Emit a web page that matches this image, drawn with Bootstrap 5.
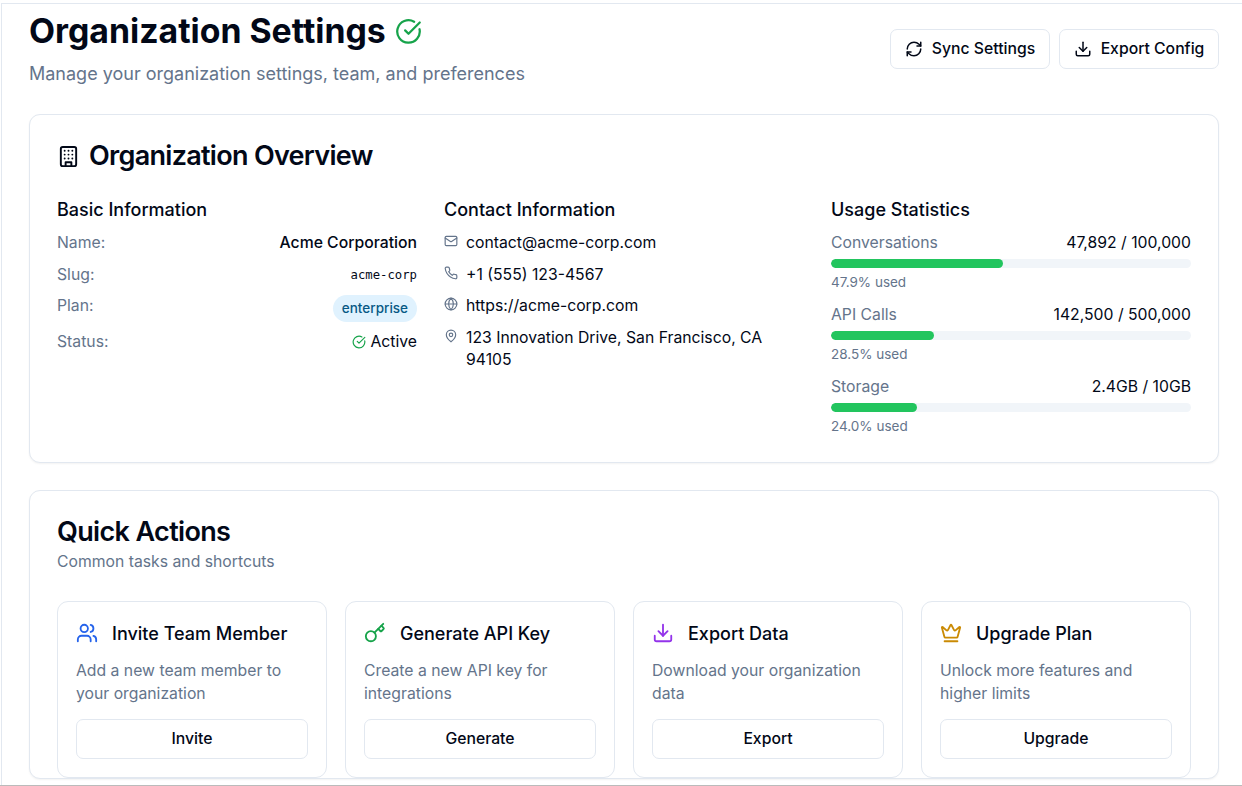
<!DOCTYPE html>
<html lang="en">
  <head>
    <meta charset="UTF-8" />
    <link href="https://cdn.jsdelivr.net/npm/bootstrap@5.3.1/dist/css/bootstrap.min.css" rel="stylesheet" />
    <title>Organization Settings</title>
    <style>
      html, body { height: 786px; overflow: hidden; }
      body { font-family: Inter, "Liberation Sans", sans-serif; color: #020817; background: #fff; font-size: 15.75px; line-height: 22.5px; }
      .app-frame { height: 786px; overflow: hidden; padding-top: 3px; border-bottom: 1px solid #bbb; }
      .page-wrap { margin-left: 1px; border-top: 1px solid #e2e8f0; border-left: 1px solid #e2e8f0; height: 782px; padding: 0 23px 0 27px; overflow: hidden; }
      .page-head { height: 110px; }
      .page-title { font-size: 33.8px; line-height: 54px; font-weight: 700; margin: 0; color: #020817; gap: 9px; }
      .page-sub { font-size: 18px; line-height: 27px; color: #64748b; margin: 2px 0 0; }
      .ic { fill: none; stroke: currentColor; stroke-width: 2; stroke-linecap: round; stroke-linejoin: round; flex-shrink: 0; }
      .btn-plain { --bs-btn-border-color: #e2e8f0; --bs-btn-hover-border-color: #e2e8f0; --bs-btn-color: #020817; --bs-btn-bg: #fff; --bs-btn-font-size: 15.75px; --bs-btn-font-weight: 500; --bs-btn-border-radius: 7px; height: 40px; padding: 0; line-height: 1; }
      .head-actions { gap: 9px; margin-top: 25px; }
      .head-btn { width: 160px; gap: 9px; }
      .panel { --bs-card-border-color: #e2e8f0; --bs-card-border-radius: 11px; width: 1190px; box-shadow: 0 1px 2px rgba(0,0,0,.05); }
      .overview { height: 349px; margin-bottom: 27px; }
      .panel .card-body { padding: 21px 27px 0; }
      .panel-title { font-size: 27px; line-height: 40px; font-weight: 600; margin: 0; letter-spacing: -.65px; }
      .overview-head { gap: 9px; }
      .overview-head .panel-title { letter-spacing: -.7px; }
      .info-grid { display: grid; grid-template-columns: repeat(3, 360px); column-gap: 27px; margin-top: 20px; }
      .sec-title { font-size: 18px; line-height: 27px; font-weight: 500; margin: 0 0 9px; }
      .stack { display: flex; flex-direction: column; gap: 9px; }
      .muted-txt { color: #64748b; }
      .strong-txt { font-weight: 500; }
      .slug { font-family: "DejaVu Sans Mono", "Liberation Mono", monospace; font-size: 12.25px; }
      .plan-pill { background: #e0f2fe; color: #075985; font-size: 13.5px; font-weight: 500; height: 27px; line-height: 27px; padding: 0 9px; border-radius: 14px; }
      .usage-item { height: 72px; }
      .usage-bar { --bs-progress-height: 9px; --bs-progress-bg: #f1f5f9; --bs-progress-border-radius: 5px; --bs-progress-bar-bg: #22c55e; margin-top: 4px; }
      .usage-bar .progress-bar { border-radius: 5px; }
      .used-note { font-size: 13.5px; line-height: 20px; color: #64748b; margin-top: 4px; }
      .contact-ic { color: #64748b; margin-top: 2px; }
      .quick-sub { margin-top: -1px; }
      .action-grid { display: grid; grid-template-columns: repeat(4, 270px); column-gap: 18px; margin-top: 27px; }
      .action-card { --bs-card-border-color: #e2e8f0; --bs-card-border-radius: 11px; height: 177px; }
      .action-card .card-body { padding: 18px 18px 18px; display: flex; flex-direction: column; }
      .action-head { gap: 14px; }
      .action-title { font-size: 18px; line-height: 27px; font-weight: 500; margin: 0; }
      .action-desc { color: #64748b; line-height: 23px; margin: 12px 0 14px; }
      .tone-blue { color: #2563eb; }
      .tone-green { color: #16a34a; }
      .tone-purple { color: #9333ea; }
      .tone-amber { color: #ca8a04; }
    </style>
  </head>

  <body>
    <svg width="0" height="0" class="position-absolute">
      <defs>
        <symbol id="i-check" viewBox="0 0 24 24"><path d="M21.801 10A10 10 0 1 1 17 3.335" /><path d="m9 11 3 3L22 4" /></symbol>
        <symbol id="i-sync" viewBox="0 0 24 24"><path d="M3 12a9 9 0 0 1 9-9 9.75 9.75 0 0 1 6.74 2.74L21 8" /><path d="M21 3v5h-5" /><path d="M21 12a9 9 0 0 1-9 9 9.75 9.75 0 0 1-6.74-2.74L3 16" /><path d="M8 16H3v5" /></symbol>
        <symbol id="i-download" viewBox="0 0 24 24"><path d="M21 15v4a2 2 0 0 1-2 2H5a2 2 0 0 1-2-2v-4" /><polyline points="7 10 12 15 17 10" /><line x1="12" x2="12" y1="15" y2="3" /></symbol>
        <symbol id="i-building" viewBox="0 0 24 24"><rect width="16" height="20" x="4" y="2" rx="2" /><path d="M9 22v-4h6v4" /><path d="M8 6h.01M16 6h.01M12 6h.01M12 10h.01M12 14h.01M16 10h.01M16 14h.01M8 10h.01M8 14h.01" /></symbol>
        <symbol id="i-mail" viewBox="0 0 24 24"><rect width="20" height="16" x="2" y="4" rx="2" /><path d="m22 7-8.97 5.7a1.94 1.94 0 0 1-2.06 0L2 7" /></symbol>
        <symbol id="i-phone" viewBox="0 0 24 24"><path d="M22 16.92v3a2 2 0 0 1-2.18 2 19.79 19.79 0 0 1-8.63-3.07 19.5 19.5 0 0 1-6-6 19.79 19.79 0 0 1-3.07-8.67A2 2 0 0 1 4.11 2h3a2 2 0 0 1 2 1.72 12.84 12.84 0 0 0 .7 2.81 2 2 0 0 1-.45 2.11L8.09 9.91a16 16 0 0 0 6 6l1.27-1.27a2 2 0 0 1 2.11-.45 12.84 12.84 0 0 0 2.81.7A2 2 0 0 1 22 16.92z" /></symbol>
        <symbol id="i-globe" viewBox="0 0 24 24"><circle cx="12" cy="12" r="10" /><path d="M12 2a14.5 14.5 0 0 0 0 20 14.5 14.5 0 0 0 0-20" /><path d="M2 12h20" /></symbol>
        <symbol id="i-pin" viewBox="0 0 24 24"><path d="M20 10c0 6-8 12-8 12s-8-6-8-12a8 8 0 0 1 16 0Z" /><circle cx="12" cy="10" r="3" /></symbol>
        <symbol id="i-users" viewBox="0 0 24 24"><path d="M16 21v-2a4 4 0 0 0-4-4H6a4 4 0 0 0-4 4v2" /><circle cx="9" cy="7" r="4" /><path d="M22 21v-2a4 4 0 0 0-3-3.87" /><path d="M16 3.13a4 4 0 0 1 0 7.75" /></symbol>
        <symbol id="i-key" viewBox="0 0 24 24"><path d="m15.5 7.5 2.3 2.3a1 1 0 0 0 1.4 0l2.1-2.1a1 1 0 0 0 0-1.4L19 4" /><path d="m21 2-9.6 9.6" /><circle cx="7.5" cy="15.5" r="5.5" /></symbol>
        <symbol id="i-crown" viewBox="0 0 24 24"><path d="M11.562 3.266a.5.5 0 0 1 .876 0L15.39 8.87a1 1 0 0 0 1.516.294L21.183 5.5a.5.5 0 0 1 .798.519l-2.834 10.246a1 1 0 0 1-.956.734H5.81a1 1 0 0 1-.957-.734L2.02 6.02a.5.5 0 0 1 .798-.519l4.276 3.664a1 1 0 0 0 1.516-.294z" /><path d="M5 21h14" /></symbol>
      </defs>
    </svg>

    <div class="app-frame">
      <div class="page-wrap">
        <!-- Page header -->
        <div class="page-head d-flex justify-content-between align-items-start">
          <div>
            <h1 class="page-title d-flex align-items-center">Organization Settings
              <svg class="ic tone-green" width="27" height="27"><use href="#i-check" /></svg>
            </h1>
            <p class="page-sub">Manage your organization settings, team, and preferences</p>
          </div>
          <div class="d-flex head-actions">
            <button class="btn btn-plain head-btn d-flex align-items-center justify-content-center">
              <svg class="ic" width="18" height="18"><use href="#i-sync" /></svg>Sync Settings
            </button>
            <button class="btn btn-plain head-btn d-flex align-items-center justify-content-center">
              <svg class="ic" width="18" height="18"><use href="#i-download" /></svg>Export Config
            </button>
          </div>
        </div>

        <!-- Organization overview -->
        <div class="card panel overview">
          <div class="card-body">
            <div class="d-flex align-items-center overview-head">
              <svg class="ic" width="23" height="23"><use href="#i-building" /></svg>
              <h2 class="panel-title">Organization Overview</h2>
            </div>
            <div class="info-grid">
              <div>
                <h3 class="sec-title">Basic Information</h3>
                <div class="stack">
                  <div class="d-flex justify-content-between"><span class="muted-txt">Name:</span><span class="strong-txt">Acme Corporation</span></div>
                  <div class="d-flex justify-content-between"><span class="muted-txt">Slug:</span><span class="slug">acme-corp</span></div>
                  <div class="d-flex justify-content-between"><span class="muted-txt">Plan:</span><span class="plan-pill">enterprise</span></div>
                  <div class="d-flex justify-content-between"><span class="muted-txt">Status:</span>
                    <span class="d-flex align-items-center gap-1"><svg class="ic tone-green" width="14" height="14"><use href="#i-check" /></svg>Active</span>
                  </div>
                </div>
              </div>
              <div>
                <h3 class="sec-title">Contact Information</h3>
                <div class="stack">
                  <div class="d-flex gap-2"><svg class="ic contact-ic" width="14" height="14"><use href="#i-mail" /></svg><span>contact@acme-corp.com</span></div>
                  <div class="d-flex gap-2"><svg class="ic contact-ic" width="14" height="14"><use href="#i-phone" /></svg><span>+1 (555) 123-4567</span></div>
                  <div class="d-flex gap-2"><svg class="ic contact-ic" width="14" height="14"><use href="#i-globe" /></svg><span>https://acme-corp.com</span></div>
                  <div class="d-flex gap-2"><svg class="ic contact-ic" width="14" height="14"><use href="#i-pin" /></svg><span>123 Innovation Drive, San Francisco, CA 94105</span></div>
                </div>
              </div>
              <div>
                <h3 class="sec-title">Usage Statistics</h3>
                <div class="usage-item">
                  <div class="d-flex justify-content-between"><span class="muted-txt">Conversations</span><span>47,892 / 100,000</span></div>
                  <div class="progress usage-bar"><div class="progress-bar" style="width: 47.9%"></div></div>
                  <div class="used-note">47.9% used</div>
                </div>
                <div class="usage-item">
                  <div class="d-flex justify-content-between"><span class="muted-txt">API Calls</span><span>142,500 / 500,000</span></div>
                  <div class="progress usage-bar"><div class="progress-bar" style="width: 28.5%"></div></div>
                  <div class="used-note">28.5% used</div>
                </div>
                <div class="usage-item">
                  <div class="d-flex justify-content-between"><span class="muted-txt">Storage</span><span>2.4GB / 10GB</span></div>
                  <div class="progress usage-bar"><div class="progress-bar" style="width: 24%"></div></div>
                  <div class="used-note">24.0% used</div>
                </div>
              </div>
            </div>
          </div>
        </div>

        <!-- Quick actions -->
        <div class="card panel">
          <div class="card-body">
            <h2 class="panel-title quick-title">Quick Actions</h2>
            <div class="muted-txt quick-sub">Common tasks and shortcuts</div>
            <div class="action-grid">
              <div class="card action-card"><div class="card-body">
                <div class="d-flex align-items-center action-head"><svg class="ic tone-blue" width="22" height="22"><use href="#i-users" /></svg><h3 class="action-title">Invite Team Member</h3></div>
                <p class="action-desc">Add a new team member to your organization</p>
                <button class="btn btn-plain w-100">Invite</button>
              </div></div>
              <div class="card action-card"><div class="card-body">
                <div class="d-flex align-items-center action-head"><svg class="ic tone-green" width="22" height="22"><use href="#i-key" /></svg><h3 class="action-title">Generate API Key</h3></div>
                <p class="action-desc">Create a new API key for integrations</p>
                <button class="btn btn-plain w-100">Generate</button>
              </div></div>
              <div class="card action-card"><div class="card-body">
                <div class="d-flex align-items-center action-head"><svg class="ic tone-purple" width="22" height="22"><use href="#i-download" /></svg><h3 class="action-title">Export Data</h3></div>
                <p class="action-desc">Download your organization data</p>
                <button class="btn btn-plain w-100">Export</button>
              </div></div>
              <div class="card action-card"><div class="card-body">
                <div class="d-flex align-items-center action-head"><svg class="ic tone-amber" width="22" height="22"><use href="#i-crown" /></svg><h3 class="action-title">Upgrade Plan</h3></div>
                <p class="action-desc">Unlock more features and higher limits</p>
                <button class="btn btn-plain w-100">Upgrade</button>
              </div></div>
            </div>
          </div>
        </div>
      </div>
    </div>
  </body>
</html>
